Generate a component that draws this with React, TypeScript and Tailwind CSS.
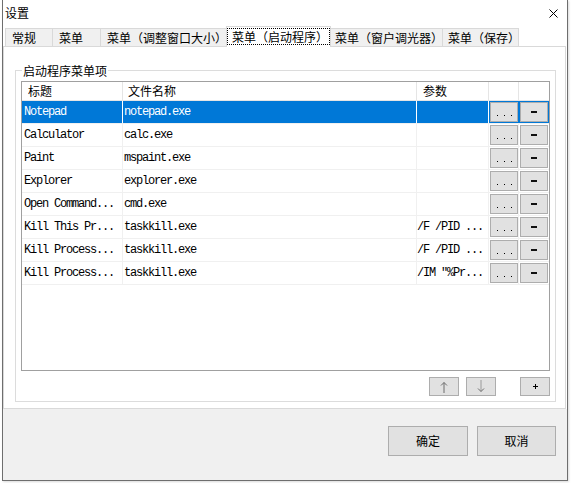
import type { ReactNode } from "react";

const cjk = "font-['Noto_Sans_CJK_SC',sans-serif]";
const mono = "font-['Liberation_Mono',monospace]";

type Tab = { label: string; cls: string; active?: boolean };

const tabs: Tab[] = [
  { label: "常规", cls: "w-[48px] pl-[6px]" },
  { label: "菜单", cls: "w-[49px] pl-[6px]" },
  { label: "菜单（调整窗口大小）", cls: "w-[127px] pl-[6px]" },
  { label: "菜单（启动程序）", cls: "w-[105px]", active: true },
  { label: "菜单（窗户调光器）", cls: "w-[113px] pl-[4px]" },
  { label: "菜单（保存）", cls: "w-[77px] pl-[5px]" },
];

type Row = { title: string; file: string; args: string };

const rows: Row[] = [
  { title: "Notepad", file: "notepad.exe", args: "" },
  { title: "Calculator", file: "calc.exe", args: "" },
  { title: "Paint", file: "mspaint.exe", args: "" },
  { title: "Explorer", file: "explorer.exe", args: "" },
  { title: "Open Command...", file: "cmd.exe", args: "" },
  { title: "Kill This Pr...", file: "taskkill.exe", args: "/F /PID ..." },
  { title: "Kill Process...", file: "taskkill.exe", args: "/F /PID ..." },
  { title: "Kill Process...", file: "taskkill.exe", args: '/IM "%Pr...' },
];

function CloseIcon() {
  return (
    <svg width="9" height="9" viewBox="0 0 9 9" className="shrink-0">
      <path d="M0.5 0.5 L8.5 8.5 M8.5 0.5 L0.5 8.5" stroke="#000" strokeWidth="1" />
    </svg>
  );
}

function SmallButton({ focused, children }: { focused?: boolean; children: ReactNode }) {
  return (
    <div
      className={
        "ml-px mt-px flex h-[20px] w-[28px] justify-center border border-[#adadad] bg-[#e1e1e1] " +
        (focused ? "shadow-[0_0_0_1px_#0078d7]" : "")
      }
    >
      {children}
    </div>
  );
}

function Dots() {
  return (
    <div className="flex items-end gap-[6px] pb-[5px]">
      <span className="h-px w-px bg-black" />
      <span className="h-px w-px bg-black" />
      <span className="h-px w-px bg-black" />
    </div>
  );
}

function ListRow({ row, selected }: { row: Row; selected: boolean }) {
  const cell = selected
    ? "border-r border-white bg-[#0078d7] text-white"
    : "border-r border-[#f0f0f0] text-black";
  return (
    <div className={`flex h-[23px] border-b border-[#f0f0f0] ${mono} text-[12px] tracking-[-1.2px]`}>
      <div className={`flex w-[101px] items-center overflow-hidden whitespace-nowrap pl-[2px] ${cell}`}>
        {row.title}
      </div>
      <div className={`flex w-[294px] items-center overflow-hidden whitespace-nowrap pl-[1px] ${cell}`}>
        {row.file}
      </div>
      <div className={`flex w-[72px] items-center overflow-hidden whitespace-nowrap ${cell}`}>
        {row.args}
      </div>
      <div className="w-[30px] border-r border-[#f0f0f0]">
        <SmallButton focused={selected}>
          <Dots />
        </SmallButton>
      </div>
      <div className="w-[30px]">
        <SmallButton focused={selected}>
          <div className="flex items-center">
            <span className="h-[2px] w-[6px] bg-[#111]" />
          </div>
        </SmallButton>
      </div>
    </div>
  );
}

export default function App() {
  return (
    <div className={`h-[483px] w-[571px] bg-white pl-[2px] text-black ${cjk}`}>
      <div className="flex h-[481px] w-[566px] flex-col border-x border-b border-[#6e6e6e] bg-white shadow-[1px_1px_2px_rgba(0,0,0,0.15)]">
        {/* title bar */}
        <div className="flex h-[26px] shrink-0 items-center justify-between pl-[2px] pr-[9px] text-[12px]">
          <span>设置</span>
          <CloseIcon />
        </div>

        {/* tab strip */}
        <div className="flex h-[20px] shrink-0 items-end pl-[2px] text-[12px]">
          {tabs.map((t, i) =>
            t.active ? (
              <div
                key={t.label}
                className={`relative z-10 -mb-px h-[21px] shrink-0 border-x border-t border-[#d9d9d9] bg-white pt-px ${t.cls} ${i ? "-ml-px" : ""}`}
              >
                <div className="flex h-[17px] items-center whitespace-nowrap border border-dotted border-black pl-[4px]">
                  {t.label}
                </div>
              </div>
            ) : (
              <div
                key={t.label}
                className={`flex h-[18px] shrink-0 items-center overflow-hidden whitespace-nowrap border-x border-t border-[#d9d9d9] bg-[#f0f0f0] ${t.cls} ${i ? "-ml-px" : ""}`}
              >
                {t.label}
              </div>
            ),
          )}
        </div>

        {/* tab page */}
        <div className="h-[363px] w-[563px] shrink-0 border border-[#d9d9d9] bg-white">
          <div className="relative ml-[11px] mt-[23px] h-[332px] w-[541px] border border-[#dcdcdc]">
            <span className="absolute left-[6px] top-[-8px] bg-white px-px text-[12px] leading-[16px]">
              启动程序菜单项
            </span>

            {/* list view */}
            <div className="ml-[5px] mt-[10px] h-[290px] w-[529px] border border-[#a0a0a0] bg-white">
              <div className="flex h-[19px] border-b border-[#e5e5e5] text-[12px]">
                <div className="flex w-[101px] items-center border-r border-[#e5e5e5] pl-[6px]">标题</div>
                <div className="flex w-[294px] items-center border-r border-[#e5e5e5] pl-[5px]">文件名称</div>
                <div className="flex w-[72px] items-center border-r border-[#e5e5e5] pl-[6px]">参数</div>
                <div className="w-[30px] border-r border-[#e5e5e5]" />
                <div className="w-[30px]" />
              </div>
              {rows.map((r, i) => (
                <ListRow key={i} row={r} selected={i === 0} />
              ))}
            </div>

            {/* move / add buttons */}
            <div className="mr-[5px] mt-[6px] flex justify-end">
              <div className="flex h-[19px] w-[30px] items-center justify-center border border-[#adadad] bg-[#e1e1e1]">
                <svg width="8" height="12" viewBox="0 0 8 12">
                  <path d="M4 1.5 V12 M1 4.5 L4 1.5 L7 4.5" stroke="#6d6d6d" strokeWidth="1" fill="none" />
                </svg>
              </div>
              <div className="ml-[7px] flex h-[19px] w-[30px] items-center justify-center border border-[#adadad] bg-[#e1e1e1]">
                <svg width="8" height="13" viewBox="0 0 8 13">
                  <path d="M4 0 V11.5" stroke="#9a9a9a" strokeWidth="1" fill="none" />
                  <path d="M1 8.5 L4 11.5 L7 8.5" stroke="#6d6d6d" strokeWidth="1" fill="none" />
                </svg>
              </div>
              <div className="ml-[24px] flex h-[19px] w-[30px] items-center justify-center border border-[#adadad] bg-[#e1e1e1]">
                <svg width="5" height="5" viewBox="0 0 5 5">
                  <path d="M2.5 0 V5 M0 2.5 H5" stroke="#000" strokeWidth="1" />
                </svg>
              </div>
            </div>
          </div>
        </div>

        {/* dialog buttons */}
        <div className="flex flex-1 items-start justify-end gap-[9px] bg-[#f0f0f0] pr-[11px] pt-[17px] text-[12px]">
          <div className="flex h-[30px] w-[80px] items-center justify-center border border-[#adadad] bg-[#e1e1e1]">
            确定
          </div>
          <div className="flex h-[30px] w-[79px] items-center justify-center border border-[#adadad] bg-[#e1e1e1]">
            取消
          </div>
        </div>
      </div>
    </div>
  );
}
